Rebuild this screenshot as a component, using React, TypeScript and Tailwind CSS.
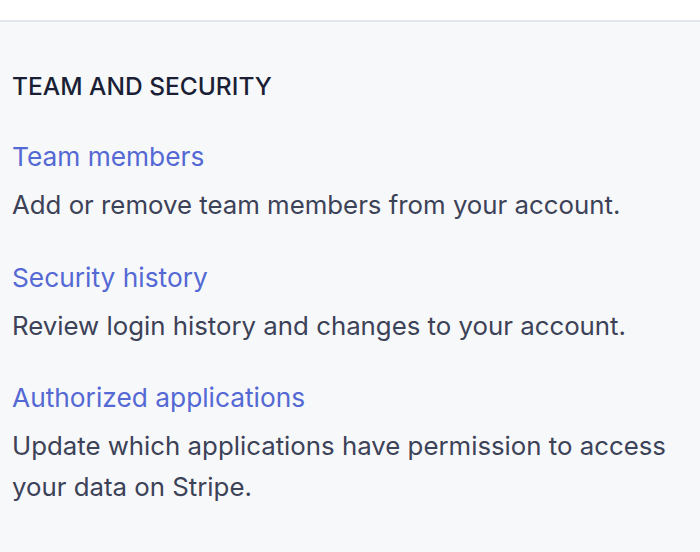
export default function App() {
  const items = [
    { title: "Team members", desc: "Add or remove team members from your account." },
    { title: "Security history", desc: "Review login history and changes to your account." },
    { title: "Authorized applications", desc: "Update which applications have permission to access your data on Stripe." },
  ];
  return (
    <div className="w-[700px] h-[552px] bg-[#f7f8fa] font-['Inter','Noto_Sans',sans-serif]">
      <div className="h-[22px] bg-white border-b-2 border-[#e3e6ec]" />
      <div className="px-3 pt-[44px]">
        <h2 className="text-[24.5px] leading-[40px] font-medium text-[#1a1f36]">TEAM AND SECURITY</h2>
        <div className="flex flex-col gap-[32px] mt-[31px]">
          {items.map((it) => (
            <div key={it.title} className="flex flex-col gap-[8px]">
              <a className="text-[26.3px] leading-[40px] text-[#5469d4]">{it.title}</a>
              <p className="text-[25.8px] leading-[40.5px] text-[#3c4257] w-[670px]">{it.desc}</p>
            </div>
          ))}
        </div>
      </div>
    </div>
  );
}
